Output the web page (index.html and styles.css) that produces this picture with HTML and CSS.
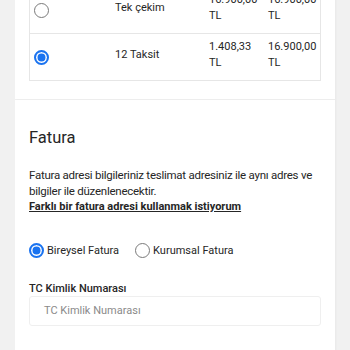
FILE: index.html
```html
<!DOCTYPE html>
<html lang="tr">
<head>
<meta charset="utf-8">
<link rel="stylesheet" href="styles.css">
</head>
<body>
<div class="page">
  <section class="card card-top">
    <table class="installments">
      <tr>
        <td class="c-radio"><span class="radio"></span></td>
        <td class="c-name">Tek çekim</td>
        <td class="c-amt">16.900,00<br>TL</td>
        <td class="c-total">16.900,00<br>TL</td>
      </tr>
      <tr>
        <td class="c-radio"><span class="radio checked"></span></td>
        <td class="c-name">12 Taksit</td>
        <td class="c-amt">1.408,33<br>TL</td>
        <td class="c-total">16.900,00<br>TL</td>
      </tr>
    </table>
  </section>
  <section class="card card-invoice">
    <h2 class="title">Fatura</h2>
    <p class="info"><span class="line">Fatura adresi bilgileriniz teslimat adresiniz ile aynı adres ve</span><br>bilgiler ile düzenlenecektir.<br><a class="link" href="#">Farklı bir fatura adresi kullanmak istiyorum</a></p>
    <div class="type-row">
      <label class="opt"><span class="radio checked"></span>Bireysel Fatura</label>
      <label class="opt"><span class="radio"></span>Kurumsal Fatura</label>
    </div>
    <div class="field">
      <div class="field-label">TC Kimlik Numarası</div>
      <div class="input"><span class="placeholder">TC Kimlik Numarası</span></div>
    </div>
  </section>
</div>
</body>
</html>
```

FILE: styles.css
```css
html, body {
  margin: 0;
  padding: 0;
  background: #f1f1f1;
  font-family: Roboto, "Liberation Sans", sans-serif;
  color: #262626;
  overflow: hidden;
}
.page {
  padding: 0 15px;
  margin-top: -14px;
}
.card {
  background: #fff;
  padding: 0 14px;
  box-shadow: 1px 0 2px rgba(0,0,0,0.04);
}
.card-top {
  padding-bottom: 18px;
  border-bottom: 1px solid #f0f0f0;
}
.installments {
  width: 100%;
  border-collapse: collapse;
  border: 1px solid #e6e6e6;
  font-size: 11px;
  line-height: 16px;
}
.installments tr + tr td {
  border-top: 1px solid #e6e6e6;
}
.installments td {
  padding: 5px 0 9px 8px;
  vertical-align: middle;
  height: 32px;
}
.c-radio { width: 73px; }
.installments td.c-radio { padding-left: 4px; }
.c-radio .radio { margin-top: 4px; }
.c-name { width: 86px; }
.c-amt { width: 51px; }
.radio {
  display: inline-block;
  box-sizing: border-box;
  width: 15px;
  height: 15px;
  border-radius: 50%;
  border: 1px solid #7a7a7a;
  background: #fff;
  vertical-align: middle;
  flex: none;
}
.radio.checked {
  border: 2px solid #1a73f0;
  box-shadow: inset 0 0 0 1.5px #fff, inset 0 0 0 8px #1a73f0;
}
.card-invoice {
  padding-top: 28px;
  padding-bottom: 40px;
}
.title {
  margin: 0;
  font-size: 16.5px;
  font-weight: 400;
  line-height: 20px;
}
.info {
  margin: 20px 0 0;
  font-size: 11.5px;
  letter-spacing: -0.25px;
  line-height: 15.5px;
}
.line {
  white-space: nowrap;
}
.link {
  color: #262626;
  font-weight: 700;
  font-size: 11px;
  letter-spacing: 0;
  text-decoration: underline;
}
.type-row {
  display: flex;
  gap: 16px;
  margin-top: 28px;
  font-size: 11px;
  line-height: 16px;
}
.opt {
  display: flex;
  align-items: center;
  gap: 3px;
}
.field {
  margin-top: 23px;
}
.field-label {
  font-size: 11px;
  font-weight: 500;
  line-height: 14px;
}
.input {
  margin-top: 0;
  height: 30px;
  box-sizing: border-box;
  border: 1px solid #efefef;
  border-radius: 3px;
  padding-left: 14px;
  display: flex;
  align-items: center;
  font-size: 11px;
}
.placeholder {
  color: #8a8a8a;
}
```
